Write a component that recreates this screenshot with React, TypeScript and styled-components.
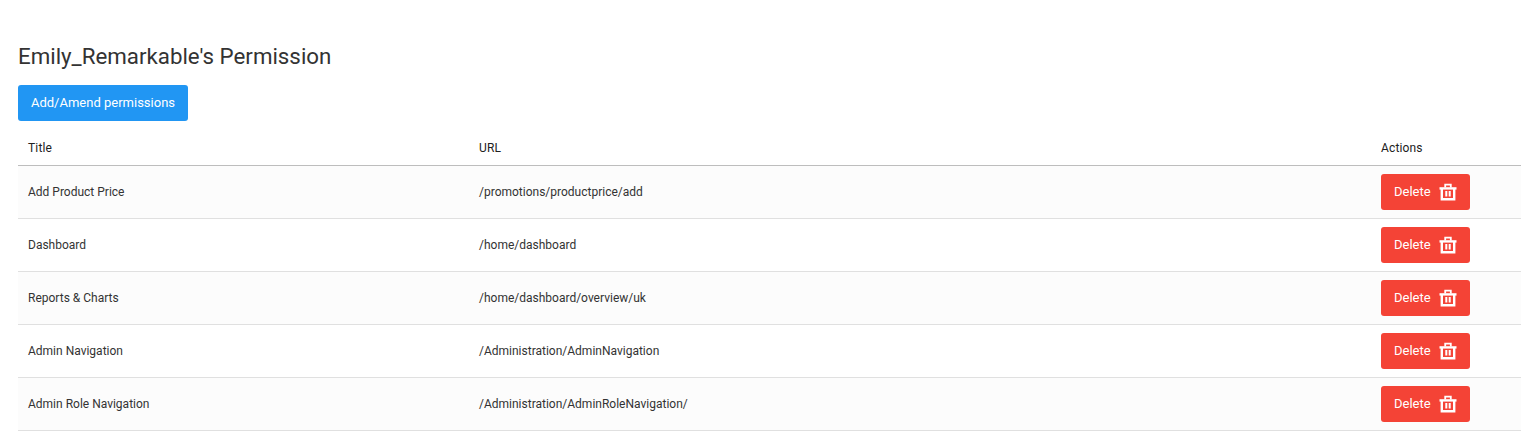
import React from 'react';
import styled, {createGlobalStyle} from 'styled-components';

const permissions = [
  {title: 'Add Product Price', url: '/promotions/productprice/add'},
  {title: 'Dashboard', url: '/home/dashboard'},
  {title: 'Reports & Charts', url: '/home/dashboard/overview/uk'},
  {title: 'Admin Navigation', url: '/Administration/AdminNavigation'},
  {title: 'Admin Role Navigation', url: '/Administration/AdminRoleNavigation/'},
];

const TrashIcon = () => (
  <svg width="18" height="18" viewBox="0 0 18 18" fill="none" stroke="currentColor" strokeWidth="2.4">
    <path d="M0.5 5.4H17.5" />
    <path d="M6.2 4.5V1.6H11.8V4.5" strokeWidth="1.8" />
    <path d="M2.8 5V16.2H15.2V5" />
    <path d="M7.3 8V13.4M10.7 8V13.4" strokeWidth="2" />
  </svg>
);

export default function App() {
  return (
    <Page>
      <GlobalStyle />
      <Title>Emily_Remarkable's Permission</Title>
      <AddButton>Add/Amend permissions</AddButton>
      <Table>
        <HeaderRow>
          <span>Title</span>
          <span>URL</span>
          <span>Actions</span>
        </HeaderRow>
        {permissions.map(item => (
          <Row key={item.url}>
            <span>{item.title}</span>
            <span>{item.url}</span>
            <DeleteButton>
              Delete
              <TrashIcon />
            </DeleteButton>
          </Row>
        ))}
      </Table>
    </Page>
  );
}

const GlobalStyle = createGlobalStyle`
  body {
    margin: 0;
    background: #fff;
    font-family: Roboto, "Liberation Sans", sans-serif;
    color: rgba(0, 0, 0, 0.87);
  }
`;

const Page = styled.div`
  padding: 42px 13px 0 18px;
`;

const Title = styled.h2`
  margin: 0 0 14px;
  font-size: 22.3px;
  line-height: 29px;
  font-weight: 400;
  color: #333;
`;

const Button = styled.button`
  border: 0;
  border-radius: 3px;
  height: 36px;
  padding-bottom: 2px;
  color: #fff;
  font-family: inherit;
  font-size: 13px;
  font-weight: 400;
`;

const AddButton = styled(Button)`
  display: block;
  width: 170px;
  padding-left: 0;
  padding-right: 0;
  background: #2196f3;
`;

const Table = styled.div`
  display: flex;
  flex-direction: column;
  margin-top: 9px;
`;

const Cells = styled.div`
  display: grid;
  grid-template-columns: 451px 902px 1fr;
  align-items: center;
  padding-left: 10px;
  font-size: 12px;
  box-sizing: border-box;
`;

const HeaderRow = styled(Cells)`
  height: 36px;
  border-bottom: 1px solid #bdbdbd;
  font-weight: 400;
  letter-spacing: 0.15px;
  color: #212121;
`;

const Row = styled(Cells)`
  height: 53px;
  border-bottom: 1px solid #e0e0e0;
  color: #333;

  &:nth-child(even) {
    background: #fcfcfc;
  }
`;

const DeleteButton = styled(Button)`
  display: flex;
  align-items: center;
  justify-content: space-between;
  width: 89px;
  padding-left: 13px;
  padding-right: 13px;
  background: #f44336;

  & > svg {
    margin-top: 1px;
  }
`;
